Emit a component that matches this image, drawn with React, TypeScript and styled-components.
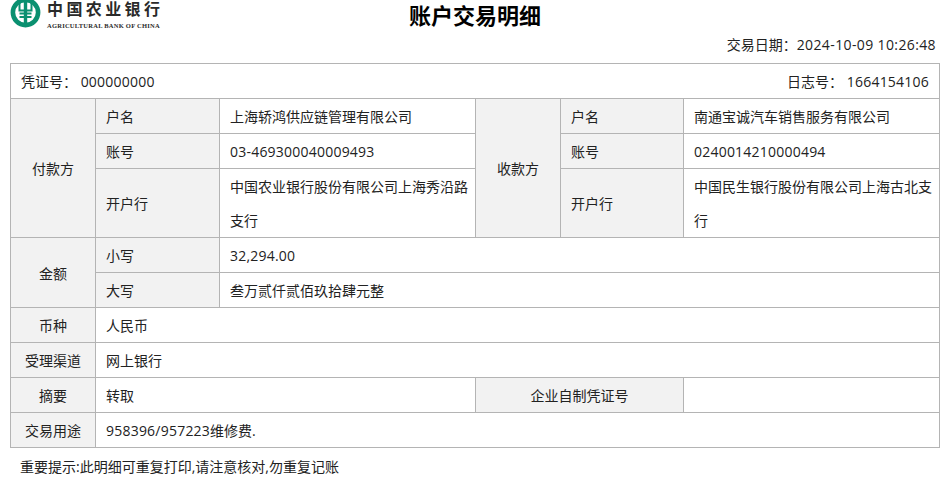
import React from 'react';
import styled, { createGlobalStyle } from 'styled-components';

const Global = createGlobalStyle`
  html, body { margin: 0; padding: 0; background: #fff; }
  body { font-family: "Open Sans", "Noto Sans CJK SC", sans-serif; font-size: 14px; color: #222; }
`;
const Page = styled.div`
  width: 949px; height: 491px; overflow: hidden; box-sizing: border-box; padding: 0 9px 0 10px;
`;
const Header = styled.div`
  height: 30px; display: grid; grid-template-columns: 1fr auto 1fr; align-items: center;
`;
const Logo = styled.div`
  display: flex; align-items: flex-start; gap: 6px; height: 30px;
`;
const LogoMark = styled.svg`
  flex: none; margin-top: -2px;
`;
const LogoText = styled.div`
  display: flex; flex-direction: column; color: #2a2a2a;
`;
const LogoCn = styled.span`
  font-size: 16px; font-weight: 700; line-height: 17px; letter-spacing: 3.4px; white-space: nowrap; font-family: "Noto Sans CJK SC", sans-serif;
`;
const LogoEn = styled.span`
  font-family: "Liberation Serif", serif; font-size: 6.5px; font-weight: 700; line-height: 8px; margin-top: 5px; letter-spacing: 0.24px; white-space: nowrap;
`;
const Title = styled.h1`
  margin: 0; font-size: 22px; font-weight: 700; color: #000; line-height: 30px;
`;
const DateRow = styled.div`
  height: 33px; line-height: 30px; text-align: right; padding-right: 4px;
`;
const Table = styled.table`
  width: 930px; border-collapse: collapse; table-layout: fixed;
`;
const Row = styled.tr<{ $h?: number }>`
  height: ${p => p.$h ?? 35}px;
`;
const Cell = styled.td`
  border: 1px solid #b4b4b4; padding: 0 5px 0 10px; line-height: 34px; background: #fff;
`;
const Label = styled(Cell)<{ $center?: boolean }>`
  background: #f2f2f2; padding-right: 10px; text-align: ${p => (p.$center ? 'center' : 'left')};
`;
const Body = styled.div`
  margin: 1px 0 -1px;
`;
const Between = styled(Body)`
  display: flex; justify-content: space-between; padding-right: 5px;
`;
const Num = styled.span<{ $wide?: boolean }>`
  letter-spacing: ${p => (p.$wide ? '0.38px' : '0.22px')};
`;
const Footer = styled.div`
  padding: 9px 0 0 10px; line-height: 20px;
`;

function BankLogo() {
  return (
    <LogoMark width="31" height="30" viewBox="0 0 31 30" aria-hidden="true">
      <circle cx="15.5" cy="14.5" r="12.6" fill="none" stroke="#0a9070" strokeWidth="4.6" />
      <rect x="13.8" y="0" width="3.4" height="29" fill="#0a9070" />
      <path d="M9.5 3v9.5h12V3M9.5 15.5h12M9.5 19h12" fill="none" stroke="#0a9070" strokeWidth="2" />
    </LogoMark>
  );
}

type CellProps = { children?: React.ReactNode; colSpan?: number; rowSpan?: number; center?: boolean };

function Data({ children, colSpan }: CellProps) {
  return <Cell colSpan={colSpan}><Body>{children}</Body></Cell>;
}

function Head({ children, colSpan, rowSpan, center }: CellProps) {
  return <Label $center={center} colSpan={colSpan} rowSpan={rowSpan}><Body>{children}</Body></Label>;
}

export default function App() {
  return (
    <Page>
      <Global />
      <Header>
        <Logo>
          <BankLogo />
          <LogoText>
            <LogoCn>中国农业银行</LogoCn>
            <LogoEn>AGRICULTURAL BANK OF CHINA</LogoEn>
          </LogoText>
        </Logo>
        <Title>账户交易明细</Title>
        <span />
      </Header>
      <DateRow>交易日期：<Num $wide>2024-10-09 10:26:48</Num></DateRow>
      <Table>
        <colgroup>
          <col style={{ width: 85 }} />
          <col style={{ width: 124 }} />
          <col style={{ width: 256 }} />
          <col style={{ width: 85 }} />
          <col style={{ width: 123 }} />
          <col />
        </colgroup>
        <tbody>
          <Row>
            <Cell colSpan={6}>
              <Between>
                <span>凭证号： <Num>000000000</Num></span>
                <span>日志号： <Num>1664154106</Num></span>
              </Between>
            </Cell>
          </Row>
          <Row>
            <Head center rowSpan={3}>付款方</Head>
            <Head>户名</Head>
            <Data>上海轿鸿供应链管理有限公司</Data>
            <Head center rowSpan={3}>收款方</Head>
            <Head>户名</Head>
            <Data>南通宝诚汽车销售服务有限公司</Data>
          </Row>
          <Row>
            <Head>账号</Head>
            <Data><Num>03-469300040009493</Num></Data>
            <Head>账号</Head>
            <Data><Num>0240014210000494</Num></Data>
          </Row>
          <Row $h={69}>
            <Head>开户行</Head>
            <Data>中国农业银行股份有限公司上海秀沿路支行</Data>
            <Head>开户行</Head>
            <Data>中国民生银行股份有限公司上海古北支行</Data>
          </Row>
          <Row>
            <Head center rowSpan={2}>金额</Head>
            <Head>小写</Head>
            <Data colSpan={4}><Num>32,294.00</Num></Data>
          </Row>
          <Row>
            <Head>大写</Head>
            <Data colSpan={4}>叁万贰仟贰佰玖拾肆元整</Data>
          </Row>
          <Row>
            <Head center>币种</Head>
            <Data colSpan={5}>人民币</Data>
          </Row>
          <Row>
            <Head center>受理渠道</Head>
            <Data colSpan={5}>网上银行</Data>
          </Row>
          <Row>
            <Head center>摘要</Head>
            <Data colSpan={2}>转取</Data>
            <Head center colSpan={2}>企业自制凭证号</Head>
            <Data />
          </Row>
          <Row>
            <Head center>交易用途</Head>
            <Data colSpan={5}><Num>958396/957223</Num>维修费.</Data>
          </Row>
        </tbody>
      </Table>
      <Footer>重要提示:此明细可重复打印,请注意核对,勿重复记账</Footer>
    </Page>
  );
}
